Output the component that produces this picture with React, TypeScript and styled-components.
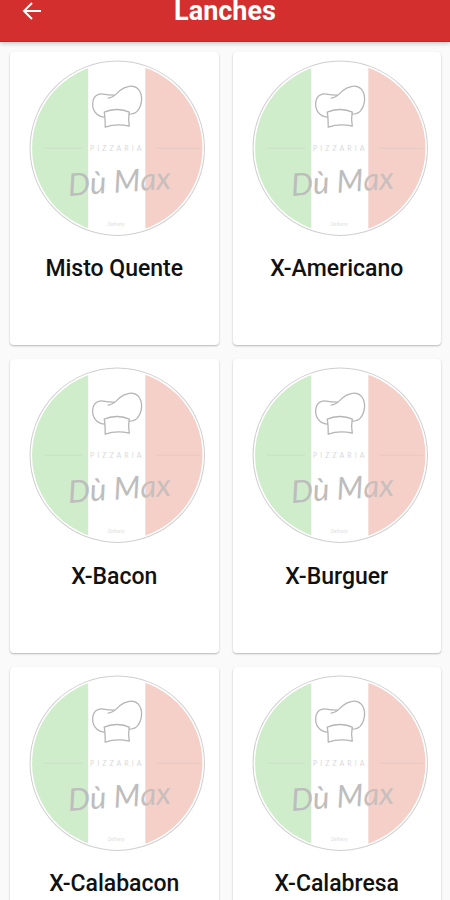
import React from "react";
import styled, { createGlobalStyle } from "styled-components";

const GlobalStyle = createGlobalStyle`
  *, *::before, *::after { box-sizing: border-box; }
  body {
    margin: 0;
    background: #fafafa;
    color: #111;
    font-family: Roboto, "Liberation Sans", sans-serif;
  }
`;

const AppBar = styled.header`
  display: grid;
  grid-template-columns: 64px 1fr 64px;
  align-items: center;
  padding-bottom: 19px;
  background: #d32f2f;
  border-bottom: 1px solid #c0262b;
  box-shadow: 0 2px 4px rgba(0, 0, 0, 0.18);
`;

const BackButton = styled.button`
  display: flex;
  align-items: center;
  justify-content: center;
  height: 22px;
  padding: 0;
  border: 0;
  background: none;
  color: #fff;
  cursor: pointer;
`;

const Title = styled.h1`
  margin: 0;
  color: #fff;
  font-size: 27px;
  font-weight: 700;
  line-height: 22px;
  text-align: center;
`;

const Grid = styled.ul`
  display: grid;
  grid-template-columns: 1fr 1fr;
  gap: 14px;
  margin: 0;
  padding: 10px 9px 14px 10px;
  list-style: none;
`;

const Card = styled.a`
  display: block;
  padding-bottom: 62px;
  border-radius: 4px;
  background: #fff;
  box-shadow: 0 1px 2px rgba(0, 0, 0, 0.28);
  color: inherit;
  text-decoration: none;
`;

const Picture = styled.svg`
  display: block;
  width: 100%;
`;

const Label = styled.span`
  display: block;
  padding-top: 6px;
  font-size: 23px;
  font-weight: 500;
  line-height: 28px;
  text-align: center;
`;

function BackArrow() {
  return (
    <svg width="20" height="20" viewBox="0 0 20 20" fill="none" stroke="currentColor" strokeWidth="2" aria-hidden="true">
      <path d="M19 10H2M10 2L2 10l8 8" />
    </svg>
  );
}

function Logo({ id }: { id: string }) {
  return (
    <Picture viewBox="0 0 208 197" role="img" aria-label="Pizzaria Dù Max">
      <clipPath id={id}>
        <circle cx="107" cy="96" r="85" />
      </clipPath>
      <g clipPath={`url(#${id})`}>
        <rect x="20" y="8" width="58" height="178" fill="#d0edcb" />
        <rect x="135" y="8" width="60" height="178" fill="#f5d0c9" />
      </g>
      <circle cx="107" cy="96" r="87" fill="none" stroke="#cfcfcf" />
      <g fill="none" stroke="#b5b5b5" strokeWidth="1.300" strokeLinecap="round" strokeLinejoin="round">
        <path d="M94 65C86 64 82 58 82.500 51C83 44 88 41 93 42C98 43 99 43 104 43" />
        <path d="M98 46C103 45 105 43 109 39C115 34 123 32 128 37C133 43 132 53 127 59C125 61 122 62 119 62" />
        <path d="M94 60C101 57 111 56 119 60C118 65 118 69 119 74C111 72 103 72 95 75C95 69 95 65 94 60Z" />
      </g>
      <path d="M34 96H72M146 96H190" stroke="#b8b8b8" strokeOpacity="0.25" />
      <g fontFamily="Lato, sans-serif" textAnchor="middle">
        <text x="107" y="99" fill="#dadada" fontSize="7" letterSpacing="3">PIZZARIA</text>
        <text x="109" y="140" fill="#bdbdbd" fontSize="31" fontStyle="italic" transform="rotate(-4 109 130)">
          Dù M<tspan fill="#c8bfbd">ax</tspan>
        </text>
        <text x="106" y="174" fill="#dedede" fontSize="5" fontStyle="italic">Delivery</text>
      </g>
    </Picture>
  );
}

const items = ["Misto Quente", "X-Americano", "X-Bacon", "X-Burguer", "X-Calabacon", "X-Calabresa"];

export default function App() {
  return (
    <>
      <GlobalStyle />
      <AppBar>
        <BackButton type="button" aria-label="Voltar">
          <BackArrow />
        </BackButton>
        <Title>Lanches</Title>
      </AppBar>
      <main>
        <Grid>
          {items.map((name, index) => (
            <li key={name}>
              <Card href={`#item-${index}`}>
                <Logo id={`disc-${index}`} />
                <Label>{name}</Label>
              </Card>
            </li>
          ))}
        </Grid>
      </main>
    </>
  );
}
